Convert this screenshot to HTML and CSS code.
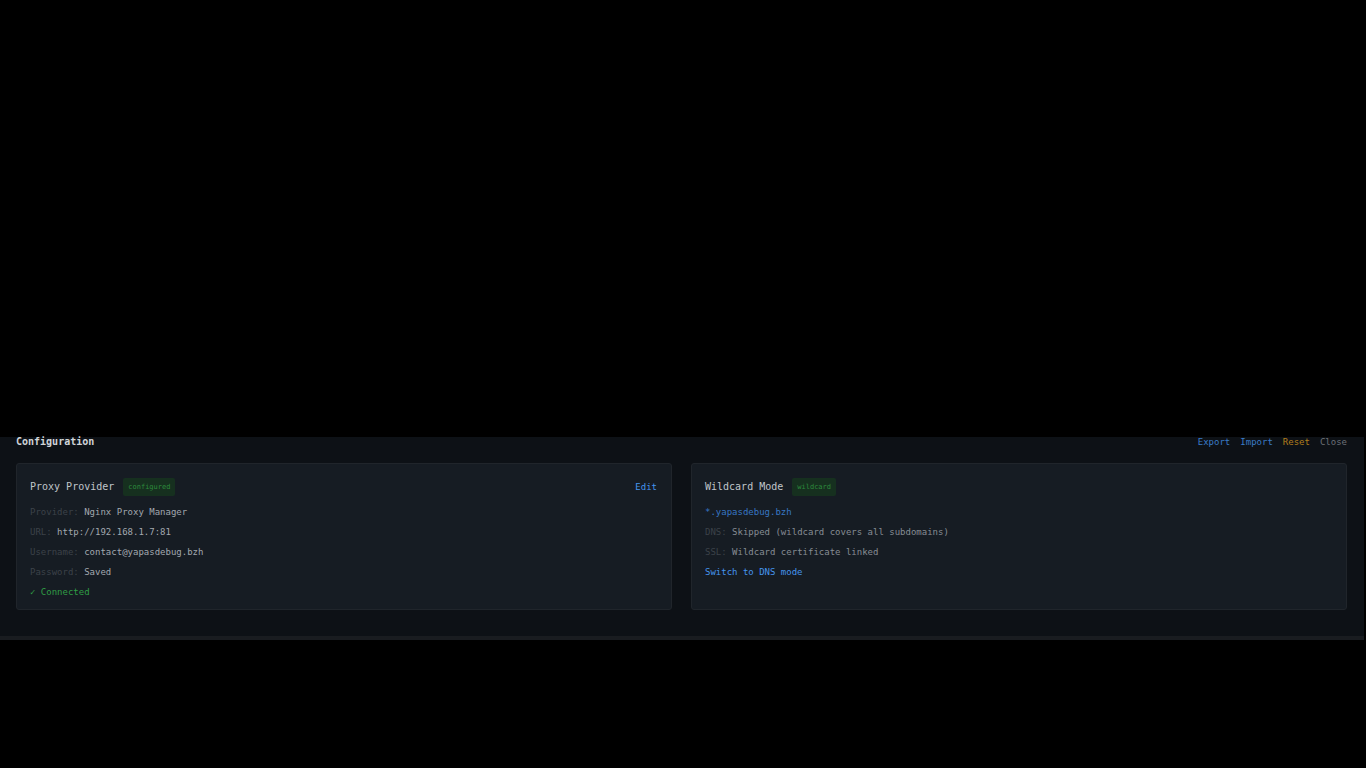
FILE: index.html
```
<!DOCTYPE html>
<html lang="en">

<head>
    <meta charset="UTF-8">
    <title>Configuration</title>
    <link rel="stylesheet" href="styles.css">
</head>

<body>
    <main class="panel">
        <header class="panel-head">
            <h1>Configuration</h1>
            <div class="actions">
                <button type="button" class="link">Export</button>
                <button type="button" class="link">Import</button>
                <button type="button" class="link warn">Reset</button>
                <button type="button" class="link muted">Close</button>
            </div>
        </header>

        <div class="cards">
            <section class="card">
                <div class="card-head">
                    <h2>Proxy Provider</h2>
                    <span class="badge">configured</span>
                    <button type="button" class="link edit">Edit</button>
                </div>
                <div class="rows">
                    <p><span class="label">Provider:</span> Nginx Proxy Manager</p>
                    <p><span class="label">URL:</span> http://192.168.1.7:81</p>
                    <p><span class="label">Username:</span> contact@yapasdebug.bzh</p>
                    <p><span class="label">Password:</span> Saved</p>
                    <p class="ok">✓ Connected</p>
                </div>
            </section>

            <section class="card">
                <div class="card-head">
                    <h2>Wildcard Mode</h2>
                    <span class="badge">wildcard</span>
                </div>
                <div class="rows">
                    <p class="domain">*.yapasdebug.bzh</p>
                    <p class="dim"><span class="label">DNS:</span> Skipped (wildcard covers all subdomains)</p>
                    <p class="dim"><span class="label">SSL:</span> Wildcard certificate linked</p>
                    <p><button type="button" class="link">Switch to DNS mode</button></p>
                </div>
            </section>
        </div>
    </main>
</body>

</html>
```
FILE: styles.css
```
* {
    box-sizing: border-box;
}

body {
    margin: 0;
    padding-top: 437px;
    background: #000;
    color: #a2a8af;
    font: 9px/20px "DejaVu Sans Mono", monospace;
}

h1,
h2,
p {
    margin: 0;
}

.panel {
    margin-right: 2px;
    padding: 0 17px 26px 16px;
    background: #0d1116;
    border-bottom: 4px solid #191c20;
}

.panel-head {
    display: flex;
    justify-content: space-between;
    align-items: center;
    height: 10px;
    margin-bottom: 16px;
}

h1 {
    color: #d0d4d8;
    font-size: 10px;
    line-height: 10px;
}

.actions {
    display: flex;
    gap: 10px;
}

.link {
    padding: 0;
    border: 0;
    background: none;
    color: #4595ee;
    font: inherit;
    line-height: 10px;
    cursor: pointer;
}

.actions .link {
    color: #3a7cc8;
}

.actions .warn {
    color: #b07d1c;
}

.actions .muted {
    color: #6c7076;
}

.cards {
    display: grid;
    grid-template-columns: 1fr 1fr;
    gap: 19px;
}

.card {
    padding: 14px 14px 7px 13px;
    background: #161c23;
    border: 1px solid #20252b;
    border-radius: 3px;
}

.card-head {
    display: flex;
    align-items: center;
    gap: 9px;
    height: 18px;
    margin-bottom: 6px;
}

h2 {
    color: #c0c5ca;
    font-size: 10px;
    font-weight: normal;
}

.badge {
    padding: 0 5px;
    background: #16301f;
    border-radius: 2px;
    color: #2c8a3c;
    font-size: 7px;
    line-height: 18px;
}

.edit {
    margin-left: auto;
}

.label {
    color: #3c4249;
}

.dim {
    color: #868c93;
}

.ok {
    color: #2f9e45;
}

.domain {
    color: #3777c4;
}
```
